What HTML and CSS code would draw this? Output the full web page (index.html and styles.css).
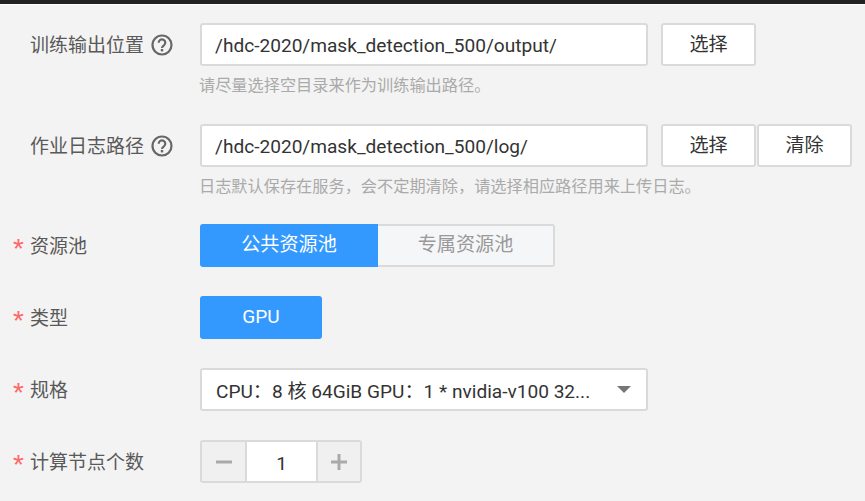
FILE: index.html
```html
<!DOCTYPE html>
<html lang="zh-CN">
<head>
    <meta charset="UTF-8">
    <title>训练作业配置</title>
    <link rel="stylesheet" href="styles.css">
</head>
<body>
    <div class="topbar"></div>
    <form class="form">
        <div class="row row-hint">
            <div class="label"><span class="label-text">训练输出位置</span>
                <svg class="help" viewBox="0 0 22 22" width="22" height="22"><circle cx="11" cy="11" r="9.5" fill="none" stroke="#666" stroke-width="2.2"/><path d="M7.7 8.8a3.3 3.3 0 1 1 5.2 2.6c-1.2.8-1.9 1.3-1.9 2.7" fill="none" stroke="#666" stroke-width="2.2"/><rect x="9.8" y="15" width="2.4" height="2.4" fill="#666"/></svg>
            </div>
            <div class="field">
                <div class="controls">
                    <div class="input">/hdc-2020/mask_detection_500/output/</div>
                    <div class="btn first">选择</div>
                </div>
                <div class="hint">请尽量选择空目录来作为训练输出路径。</div>
            </div>
        </div>
        <div class="row row-hint row-hint-short">
            <div class="label"><span class="label-text">作业日志路径</span>
                <svg class="help" viewBox="0 0 22 22" width="22" height="22"><circle cx="11" cy="11" r="9.5" fill="none" stroke="#666" stroke-width="2.2"/><path d="M7.7 8.8a3.3 3.3 0 1 1 5.2 2.6c-1.2.8-1.9 1.3-1.9 2.7" fill="none" stroke="#666" stroke-width="2.2"/><rect x="9.8" y="15" width="2.4" height="2.4" fill="#666"/></svg>
            </div>
            <div class="field">
                <div class="controls">
                    <div class="input">/hdc-2020/mask_detection_500/log/</div>
                    <div class="btn first">选择</div>
                    <div class="btn">清除</div>
                </div>
                <div class="hint">日志默认保存在服务，会不定期清除，请选择相应路径用来上传日志。</div>
            </div>
        </div>
        <div class="row">
            <div class="label required"><span class="label-text">资源池</span></div>
            <div class="segment">
                <div class="seg seg-on">公共资源池</div>
                <div class="seg seg-off">专属资源池</div>
            </div>
        </div>
        <div class="row">
            <div class="label required"><span class="label-text">类型</span></div>
            <div class="seg seg-on seg-single">GPU</div>
        </div>
        <div class="row">
            <div class="label required"><span class="label-text">规格</span></div>
            <div class="select">
                <span class="select-text">CPU：8 核 64GiB GPU：1 * nvidia-v100 32...</span>
                <span class="caret"></span>
            </div>
        </div>
        <div class="row">
            <div class="label required"><span class="label-text">计算节点个数</span></div>
            <div class="stepper">
                <div class="step step-minus">
                    <svg viewBox="0 0 16 16" width="16" height="16"><rect y="6.5" width="16" height="3" fill="#aaa"/></svg>
                </div>
                <div class="step-value">1</div>
                <div class="step step-plus">
                    <svg viewBox="0 0 16 16" width="16" height="16"><path d="M0 6.5h6.5V0h3v6.5H16v3H9.500v6.500h-3V9.500H0z" fill="#aaa"/></svg>
                </div>
            </div>
        </div>
    </form>
</body>
</html>
```
FILE: styles.css
```css
* {
    box-sizing: border-box;
}
html, body {
    height: 100%;
}
body {
    margin: 0;
    overflow: hidden;
    background: #f3f3f3;
    color: #333;
    font-family: Roboto, "Noto Sans CJK SC", sans-serif;
    font-size: 19.1px;
}
.topbar {
    height: 5px;
    background: #222;
    border-bottom: 1px solid #fff;
}
.form {
    padding: 18px 0 0 30px;
}
.row {
    display: flex;
    height: 72px;
}
.row-hint {
    height: 101px;
}
.row-hint-short {
    height: 100px;
}
.label {
    position: relative;
    width: 170px;
    height: 43px;
    display: flex;
    align-items: center;
    color: #595959;
    font-size: 19px;
}
.label-text {
    margin-top: -3px;
}
.required::before {
    content: "*";
    position: absolute;
    left: -17px;
    top: 9px;
    color: #f66;
    font-family: "Liberation Sans", sans-serif;
    font-size: 28px;
    line-height: 32px;
}
.help {
    margin-left: 7px;
}
.controls {
    display: flex;
}
.input {
    width: 448px;
    height: 43px;
    padding-left: 13px;
    line-height: 41px;
    background: #fff;
    border: 2px solid #dadada;
    border-radius: 3px;
}
.btn {
    width: 95px;
    height: 43px;
    line-height: 40px;
    text-align: center;
    background: #fff;
    border: 2px solid #dadada;
    border-radius: 3px;
    margin-left: 1px;
}
.first {
    margin-left: 13px;
}
.hint {
    margin-top: 9px;
    margin-left: -1px;
    font-size: 16.2px;
    line-height: 22px;
    color: #aaa;
}
.segment {
    display: flex;
}
.seg {
    width: 178px;
    height: 43px;
    line-height: 42px;
    text-align: center;
}
.seg-on {
    background: #3399ff;
    color: #fff;
    border-radius: 3px 0 0 3px;
}
.seg-off {
    width: 177px;
    background: #f5f6f8;
    color: #999;
    border: 2px solid #dadada;
    border-left: 0;
    border-radius: 0 3px 3px 0;
    line-height: 38px;
}
.seg-single {
    width: 122px;
    border-radius: 3px;
}
.select {
    width: 448px;
    height: 43px;
    display: flex;
    align-items: center;
    justify-content: space-between;
    padding: 0 15px 0 14px;
    background: #fff;
    border: 2px solid #dadada;
    border-radius: 3px;
}
.caret {
    width: 0;
    height: 0;
    border-left: 7px solid transparent;
    border-right: 7px solid transparent;
    border-top: 7px solid #777;
}
.stepper {
    display: flex;
    width: 162px;
    height: 43px;
    border: 2px solid #dadada;
    border-radius: 3px;
}
.step {
    display: flex;
    align-items: center;
    justify-content: center;
    background: #f0f0f0;
}
.step-minus {
    width: 43px;
}
.step-plus {
    width: 42px;
}
.step-value {
    flex: 1;
    line-height: 43px;
    text-align: center;
    background: #fff;
    border-left: 2px solid #dadada;
    border-right: 2px solid #dadada;
}
```
